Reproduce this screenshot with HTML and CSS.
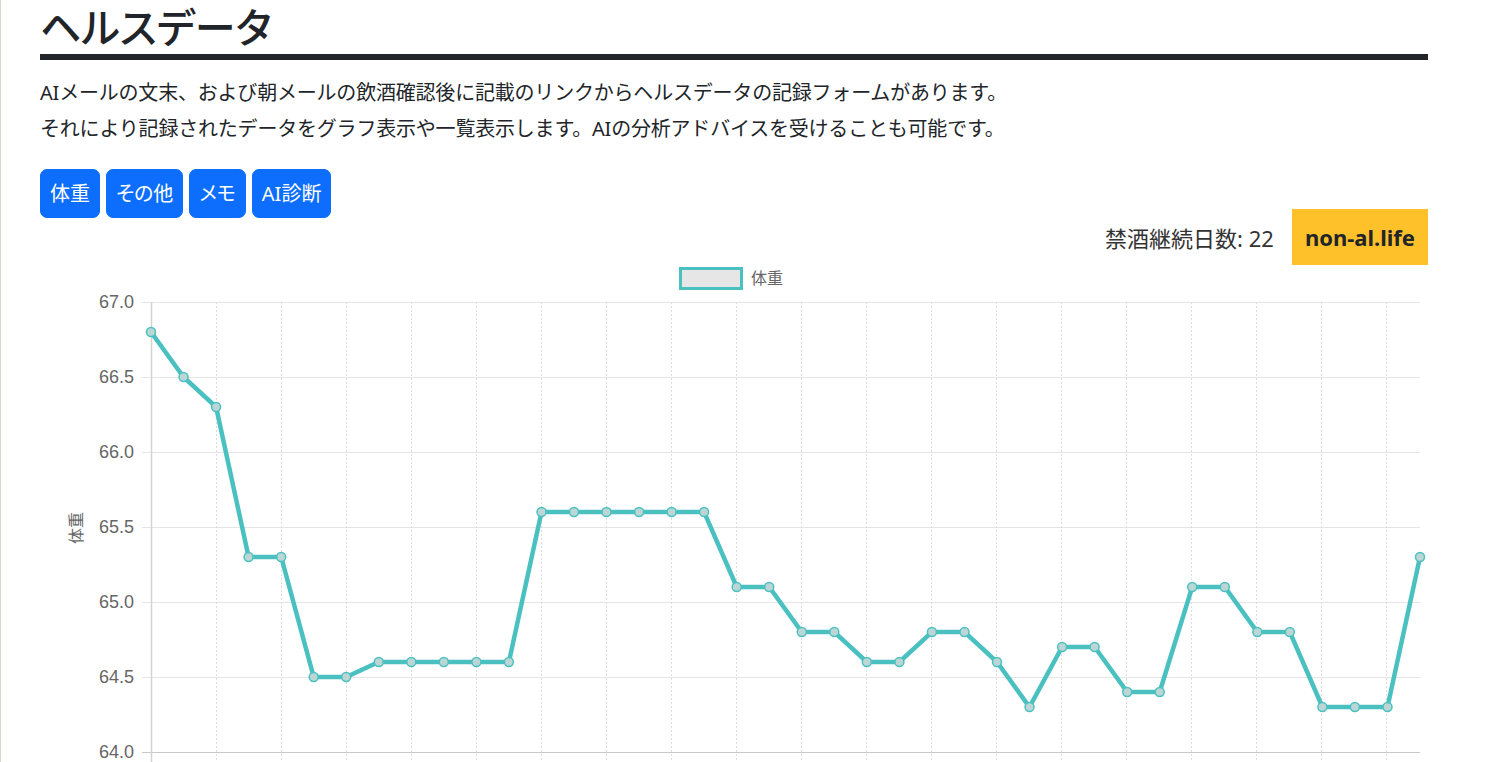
FILE: index.html
```html
<!DOCTYPE html>
<html lang="ja">
<head>
    <meta charset="UTF-8">
    <meta name="viewport" content="width=device-width, initial-scale=1.0">
    <title>ヘルスデータ</title>
    <link rel="stylesheet" href="styles.css">
</head>
<body>
    <div class="page">
        <h1 class="title">ヘルスデータ</h1>
        <p class="lead">AIメールの文末、および朝メールの飲酒確認後に記載のリンクからヘルスデータの記録フォームがあります。<br>それにより記録されたデータをグラフ表示や一覧表示します。AIの分析アドバイスを受けることも可能です。</p>

        <div class="tabs">
            <button class="tab">体重</button>
            <button class="tab">その他</button>
            <button class="tab">メモ</button>
            <button class="tab">AI診断</button>
        </div>

        <div class="status">
            <span class="days">禁酒継続日数: 22</span>
            <span class="brand">non-al.life</span>
        </div>

        <div class="chart">
            <svg class="chart-svg" width="1388" height="520" viewBox="40 265 1388 520">
                <!-- legend -->
                <rect x="680.5" y="268.5" width="61" height="20" fill="#e6e6e6" stroke="#4bc0c0" stroke-width="3"/>
                <text class="legend-label" x="751" y="278">体重</text>

                <!-- horizontal grid -->
                <g stroke="#e5e5e5" stroke-width="1">
                    <line x1="142" y1="302.5" x2="1420" y2="302.5"/>
                    <line x1="142" y1="377.5" x2="1420" y2="377.5"/>
                    <line x1="142" y1="452.5" x2="1420" y2="452.5"/>
                    <line x1="142" y1="527.5" x2="1420" y2="527.5"/>
                    <line x1="142" y1="602.5" x2="1420" y2="602.5"/>
                    <line x1="142" y1="677.5" x2="1420" y2="677.5"/>
                </g>
                <line x1="142" y1="752.5" x2="1420" y2="752.5" stroke="#c9c9c9"/>

                <!-- vertical grid (every other point) -->
                <g stroke="#dddddd" stroke-width="1" stroke-dasharray="2 2">
                    <line x1="216.5" y1="302" x2="216.5" y2="762"/>
                    <line x1="281.5" y1="302" x2="281.5" y2="762"/>
                    <line x1="346.5" y1="302" x2="346.5" y2="762"/>
                    <line x1="411.5" y1="302" x2="411.5" y2="762"/>
                    <line x1="476.5" y1="302" x2="476.5" y2="762"/>
                    <line x1="541.5" y1="302" x2="541.5" y2="762"/>
                    <line x1="606.5" y1="302" x2="606.5" y2="762"/>
                    <line x1="671.5" y1="302" x2="671.5" y2="762"/>
                    <line x1="736.5" y1="302" x2="736.5" y2="762"/>
                    <line x1="801.5" y1="302" x2="801.5" y2="762"/>
                    <line x1="866.5" y1="302" x2="866.5" y2="762"/>
                    <line x1="931.5" y1="302" x2="931.5" y2="762"/>
                    <line x1="996.5" y1="302" x2="996.5" y2="762"/>
                    <line x1="1061.5" y1="302" x2="1061.5" y2="762"/>
                    <line x1="1126.5" y1="302" x2="1126.5" y2="762"/>
                    <line x1="1191.5" y1="302" x2="1191.5" y2="762"/>
                    <line x1="1256.5" y1="302" x2="1256.5" y2="762"/>
                    <line x1="1321.5" y1="302" x2="1321.5" y2="762"/>
                    <line x1="1386.5" y1="302" x2="1386.5" y2="762"/>
                </g>
                <line x1="151.5" y1="302" x2="151.5" y2="762" stroke="#d8d2cc" stroke-width="1.5"/>

                <!-- y ticks -->
                <g class="tick">
                    <text x="134" y="308">67.0</text>
                    <text x="134" y="383">66.5</text>
                    <text x="134" y="458">66.0</text>
                    <text x="134" y="533">65.5</text>
                    <text x="134" y="608">65.0</text>
                    <text x="134" y="683">64.5</text>
                    <text x="134" y="758">64.0</text>
                </g>
                <text class="axis-title" x="76" y="528" transform="rotate(-90 76 528)">体重</text>

                <!-- data -->
                <polyline fill="none" stroke="#4bc0c0" stroke-width="4.5" points="151,332 183.5,377 216.1,407 248.6,557 281.2,557 313.7,677 346.2,677 378.8,662 411.3,662 443.8,662 476.4,662 508.9,662 541.5,512 574,512 606.5,512 639.1,512 671.6,512 704.1,512 736.7,587 769.2,587 801.8,632 834.3,632 866.8,662 899.4,662 931.9,632 964.5,632 997,662 1029.5,707 1062.1,647 1094.6,647 1127.2,692 1159.7,692 1192.2,587 1224.8,587 1257.3,632 1289.8,632 1322.4,707 1354.9,707 1387.5,707 1420,557"/>
                <g fill="#bcd6d6" stroke="#4bc0c0" stroke-width="1.5">
                    <circle cx="151" cy="332" r="4.5"/>
                    <circle cx="183.5" cy="377" r="4.5"/>
                    <circle cx="216.1" cy="407" r="4.5"/>
                    <circle cx="248.6" cy="557" r="4.5"/>
                    <circle cx="281.2" cy="557" r="4.5"/>
                    <circle cx="313.7" cy="677" r="4.5"/>
                    <circle cx="346.2" cy="677" r="4.5"/>
                    <circle cx="378.8" cy="662" r="4.5"/>
                    <circle cx="411.3" cy="662" r="4.5"/>
                    <circle cx="443.8" cy="662" r="4.5"/>
                    <circle cx="476.4" cy="662" r="4.5"/>
                    <circle cx="508.9" cy="662" r="4.5"/>
                    <circle cx="541.5" cy="512" r="4.5"/>
                    <circle cx="574" cy="512" r="4.5"/>
                    <circle cx="606.5" cy="512" r="4.5"/>
                    <circle cx="639.1" cy="512" r="4.5"/>
                    <circle cx="671.6" cy="512" r="4.5"/>
                    <circle cx="704.1" cy="512" r="4.5"/>
                    <circle cx="736.7" cy="587" r="4.5"/>
                    <circle cx="769.2" cy="587" r="4.5"/>
                    <circle cx="801.8" cy="632" r="4.5"/>
                    <circle cx="834.3" cy="632" r="4.5"/>
                    <circle cx="866.8" cy="662" r="4.5"/>
                    <circle cx="899.4" cy="662" r="4.5"/>
                    <circle cx="931.9" cy="632" r="4.5"/>
                    <circle cx="964.5" cy="632" r="4.5"/>
                    <circle cx="997" cy="662" r="4.5"/>
                    <circle cx="1029.5" cy="707" r="4.5"/>
                    <circle cx="1062.1" cy="647" r="4.5"/>
                    <circle cx="1094.6" cy="647" r="4.5"/>
                    <circle cx="1127.2" cy="692" r="4.5"/>
                    <circle cx="1159.7" cy="692" r="4.5"/>
                    <circle cx="1192.2" cy="587" r="4.5"/>
                    <circle cx="1224.8" cy="587" r="4.5"/>
                    <circle cx="1257.3" cy="632" r="4.5"/>
                    <circle cx="1289.8" cy="632" r="4.5"/>
                    <circle cx="1322.4" cy="707" r="4.5"/>
                    <circle cx="1354.9" cy="707" r="4.5"/>
                    <circle cx="1387.5" cy="707" r="4.5"/>
                    <circle cx="1420" cy="557" r="4.5"/>
                </g>
            </svg>
        </div>
    </div>
</body>
</html>
```

FILE: styles.css
```css
body {
    margin: 0;
    border-left: 1px solid #ddd4c6;
    background: #fff;
    color: #212529;
    font-family: "Noto Sans", "Noto Sans CJK JP", sans-serif;
}
.page {
    width: 1388px;
    margin-left: 39px;
}
.title {
    margin: 0;
    border-bottom: 6px solid #212529;
    font-size: 41px;
    line-height: 54px;
    font-weight: 500;
    font-feature-settings: "palt";
}
.lead {
    margin: 15px 0 22px;
    font-size: 20px;
    line-height: 36px;
    letter-spacing: -0.2px;
}
.tabs {
    display: flex;
    gap: 6px;
}
.tab {
    padding: 8px 9px;
    border: 1px solid #0d6efd;
    border-radius: 7px;
    background-color: #0d6efd;
    color: #fff;
    font-family: inherit;
    font-size: 20px;
    line-height: 31px;
    font-feature-settings: "palt";
    cursor: pointer;
}
.status {
    display: flex;
    justify-content: flex-end;
    align-items: center;
    gap: 18px;
    margin-top: -9px;
}
.days {
    font-size: 22px;
    color: #333;
}
.brand {
    padding: 0 13px;
    height: 56px;
    line-height: 56px;
    background-color: #ffc12a;
    font-size: 22px;
    font-weight: bold;
    color: #212529;
}
.chart-svg {
    display: block;
}
.chart-svg text {
    font-family: "Liberation Sans", "Noto Sans CJK JP", sans-serif;
    fill: #666;
}
.tick text {
    font-size: 18px;
    text-anchor: end;
}
.legend-label {
    font-size: 16px;
    dominant-baseline: central;
}
.axis-title {
    font-size: 16px;
    text-anchor: middle;
    dominant-baseline: central;
}
```
